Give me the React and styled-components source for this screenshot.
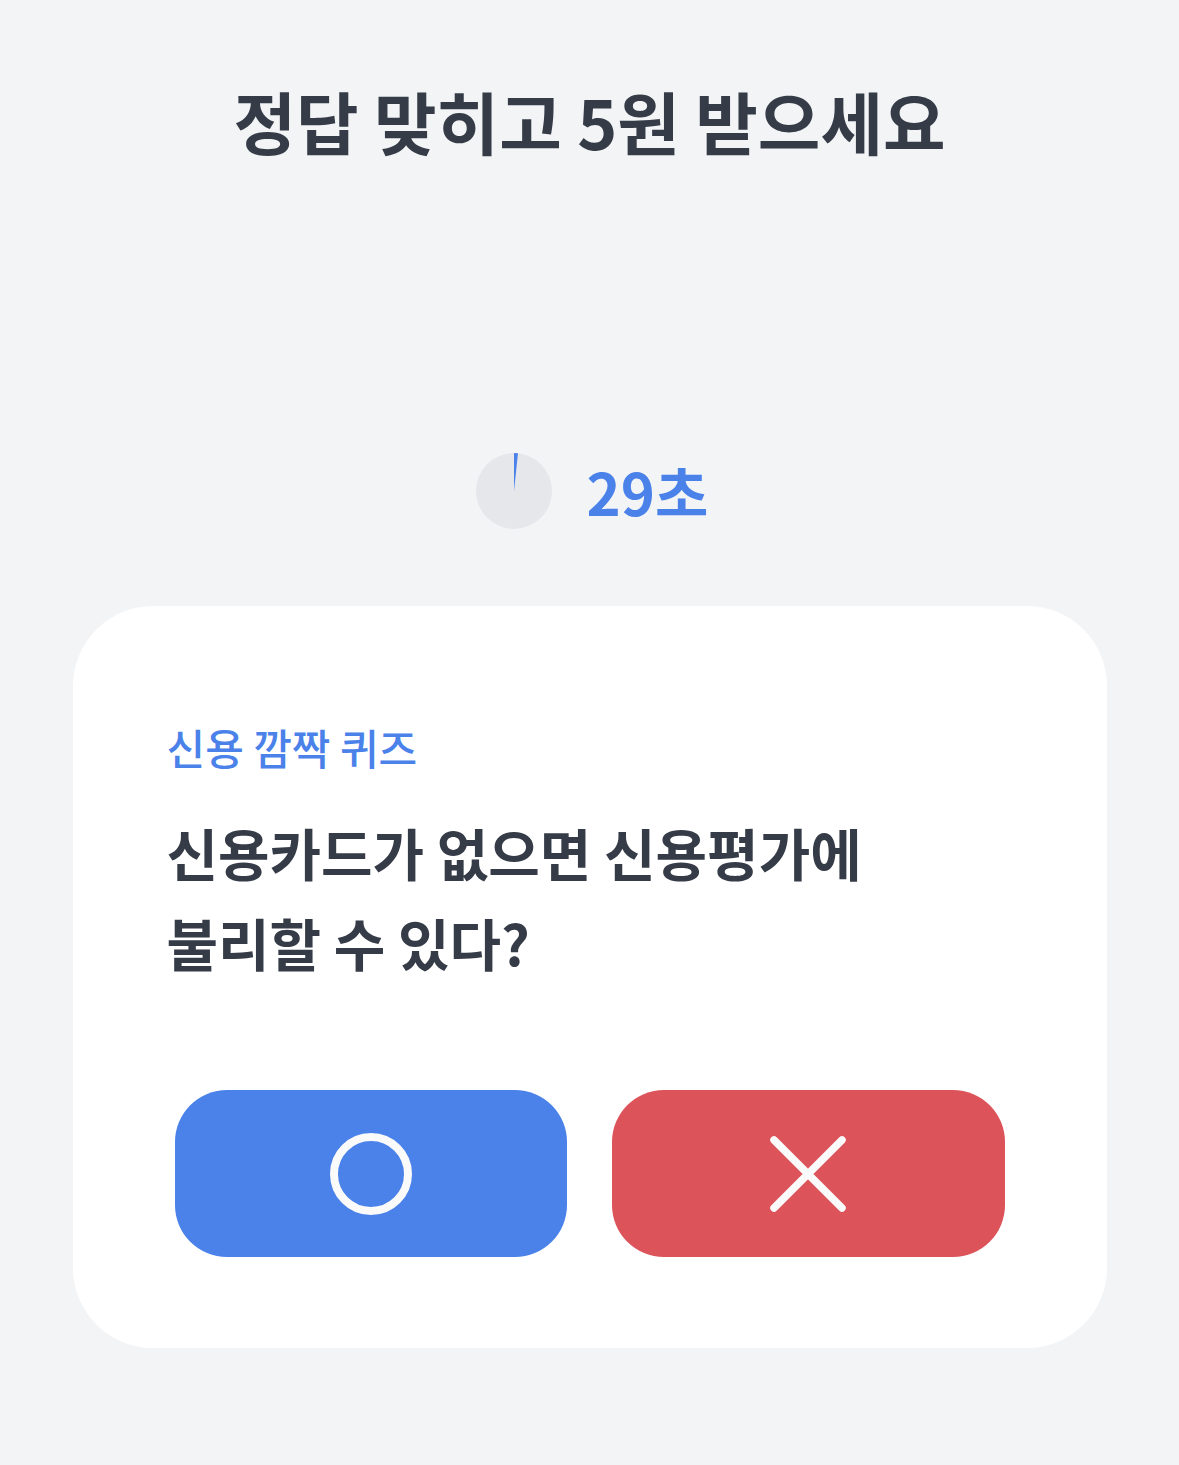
import React from "react";
import styled, { createGlobalStyle } from "styled-components";

const GlobalStyle = createGlobalStyle`
  body {
    margin: 0;
    background: #f3f4f6;
    font-family: "Noto Sans CJK KR", "Noto Sans", sans-serif;
  }
`;

const Page = styled.div`
  min-height: 1465px;
  display: flex;
  flex-direction: column;
  align-items: center;
  padding-top: 76px;
  box-sizing: border-box;
`;

const Title = styled.h1`
  margin: 0;
  font-size: 68px;
  font-weight: 700;
  letter-spacing: 0;
  line-height: 90px;
  color: #353c48;
`;

const TimerRow = styled.div`
  margin-top: 283px;
  padding-left: 4px;
  display: flex;
  align-items: center;
  gap: 34px;
`;

const TimerText = styled.span`
  font-size: 58px;
  font-weight: 700;
  letter-spacing: 0;
  color: #4a82ea;
`;

const Card = styled.section`
  margin-top: 73px;
  width: 1034px;
  height: 742px;
  box-sizing: border-box;
  background: #fff;
  border-radius: 80px;
  padding: 113px 94px 0;
`;

const Label = styled.div`
  font-size: 42px;
  font-weight: 500;
  letter-spacing: 0;
  color: #4a82ea;
  line-height: 56px;
`;

const Question = styled.h2`
  margin: 32px 0 0;
  font-size: 56px;
  font-weight: 700;
  letter-spacing: 0;
  line-height: 90px;
  color: #353c48;
`;

const Buttons = styled.div`
  margin: 103px 8px 0;
  display: grid;
  grid-template-columns: 1fr 1fr;
  gap: 45px;
`;

const AnswerButton = styled.button`
  height: 167px;
  border: none;
  border-radius: 52px;
  background: ${({ $tone }) => ($tone === "no" ? "#dc5359" : "#4a82ea")};
  display: flex;
  align-items: center;
  justify-content: center;
  cursor: pointer;
`;

function Pie() {
  const r = 38;
  const a = (6 * Math.PI) / 180;
  const x = 39 + r * Math.sin(a);
  const y = 39 - r * Math.cos(a);
  return (
    <svg width="78" height="78" viewBox="0 0 78 78">
      <circle cx="39" cy="39" r={r} fill="#e5e7eb" />
      <path d={`M39 39 L39 1 A${r} ${r} 0 0 1 ${x} ${y} Z`} fill="#4a82ea" />
    </svg>
  );
}

export default function App() {
  return (
    <>
      <GlobalStyle />
      <Page>
        <Title>정답 맞히고 5원 받으세요</Title>
        <TimerRow>
          <Pie />
          <TimerText>29초</TimerText>
        </TimerRow>
        <Card>
          <Label>신용 깜짝 퀴즈</Label>
          <Question>
            신용카드가 없으면 신용평가에
            <br />
            불리할 수 있다?
          </Question>
          <Buttons>
            <AnswerButton $tone="yes" aria-label="O">
              <svg width="86" height="86" viewBox="0 0 86 86">
                <circle cx="43" cy="43" r="37" fill="none" stroke="#fafafa" strokeWidth="8" />
              </svg>
            </AnswerButton>
            <AnswerButton $tone="no" aria-label="X">
              <svg width="78" height="78" viewBox="0 0 78 78">
                <path d="M5 5 L73 73 M73 5 L5 73" stroke="#fafafa" strokeWidth="7.5" strokeLinecap="round" />
              </svg>
            </AnswerButton>
          </Buttons>
        </Card>
      </Page>
    </>
  );
}
